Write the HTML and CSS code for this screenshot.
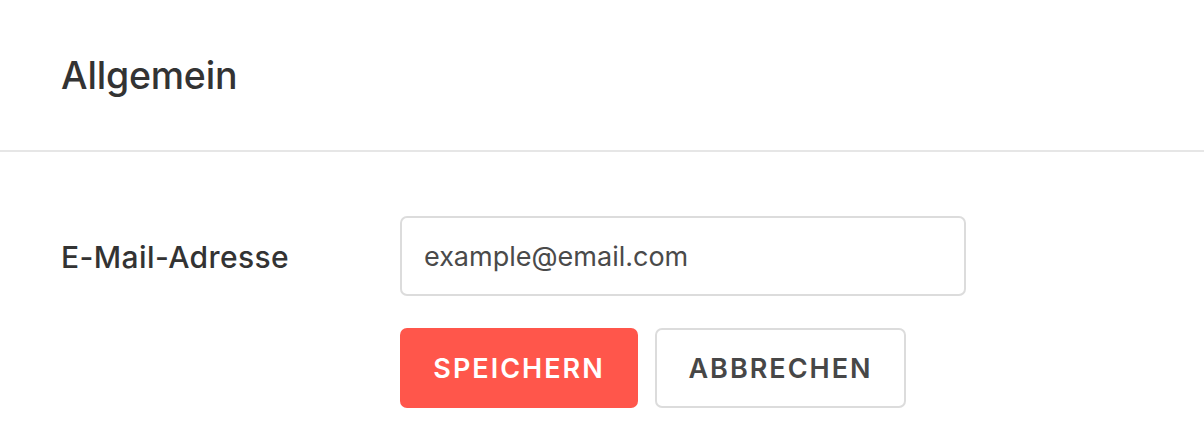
FILE: index.html
```html
<!DOCTYPE html>
<html lang="de">
<head>
<meta charset="utf-8">
<title>Allgemein</title>
<link rel="stylesheet" href="styles.css">
</head>
<body>
  <header class="panel-header">
    <h1 class="panel-title">Allgemein</h1>
  </header>
  <section class="panel-body">
    <div class="form-row">
      <label class="field-label" for="email">E-Mail-Adresse</label>
      <div class="field-control">
        <input id="email" class="text-input" type="text" value="example@email.com">
        <div class="actions">
          <button class="btn btn-primary">SPEICHERN</button>
          <button class="btn btn-secondary">ABBRECHEN</button>
        </div>
      </div>
    </div>
  </section>
</body>
</html>
```

FILE: styles.css
```css
* { box-sizing: border-box; }
html, body { margin: 0; padding: 0; background: #fff; }
body {
  font-family: Inter, "Noto Sans", sans-serif;
  color: #333;
  width: 1204px;
  height: 438px;
  overflow: hidden;
}
.panel-header {
  height: 152px;
  padding: 0 61px;
  display: flex;
  align-items: center;
  border-bottom: 2px solid #e6e6e6;
}
.panel-title {
  margin: 0;
  font-size: 37.5px;
  font-weight: 500;
  color: #333;
  letter-spacing: -0.2px;
}
.panel-body {
  padding: 64px 61px 0;
}
.form-row {
  display: flex;
  align-items: flex-start;
}
.field-label {
  width: 339px;
  height: 80px;
  display: flex;
  align-items: center;
  padding-top: 2px;
  font-size: 30px;
  font-weight: 500;
  letter-spacing: 0.4px;
  color: #333;
}
.field-control {
  display: flex;
  flex-direction: column;
  gap: 32px;
}
.text-input {
  width: 566px;
  height: 80px;
  border: 2px solid #dcdcdc;
  border-radius: 7px;
  padding: 0 22px;
  font-family: Inter, "Noto Sans", sans-serif;
  font-size: 27px;
  color: #4a4a4a;
  outline: none;
}
.actions {
  display: flex;
  gap: 17px;
}
.btn {
  height: 80px;
  border-radius: 7px;
  font-family: Inter, "Noto Sans", sans-serif;
  font-size: 27px;
  font-weight: 600;
  letter-spacing: 2px;
  cursor: pointer;
}
.btn-primary {
  width: 238px;
  background: #ff564b;
  border: none;
  color: #fff;
}
.btn-secondary {
  width: 251px;
  background: #fff;
  border: 2px solid #dcdcdc;
  color: #474747;
}
```
